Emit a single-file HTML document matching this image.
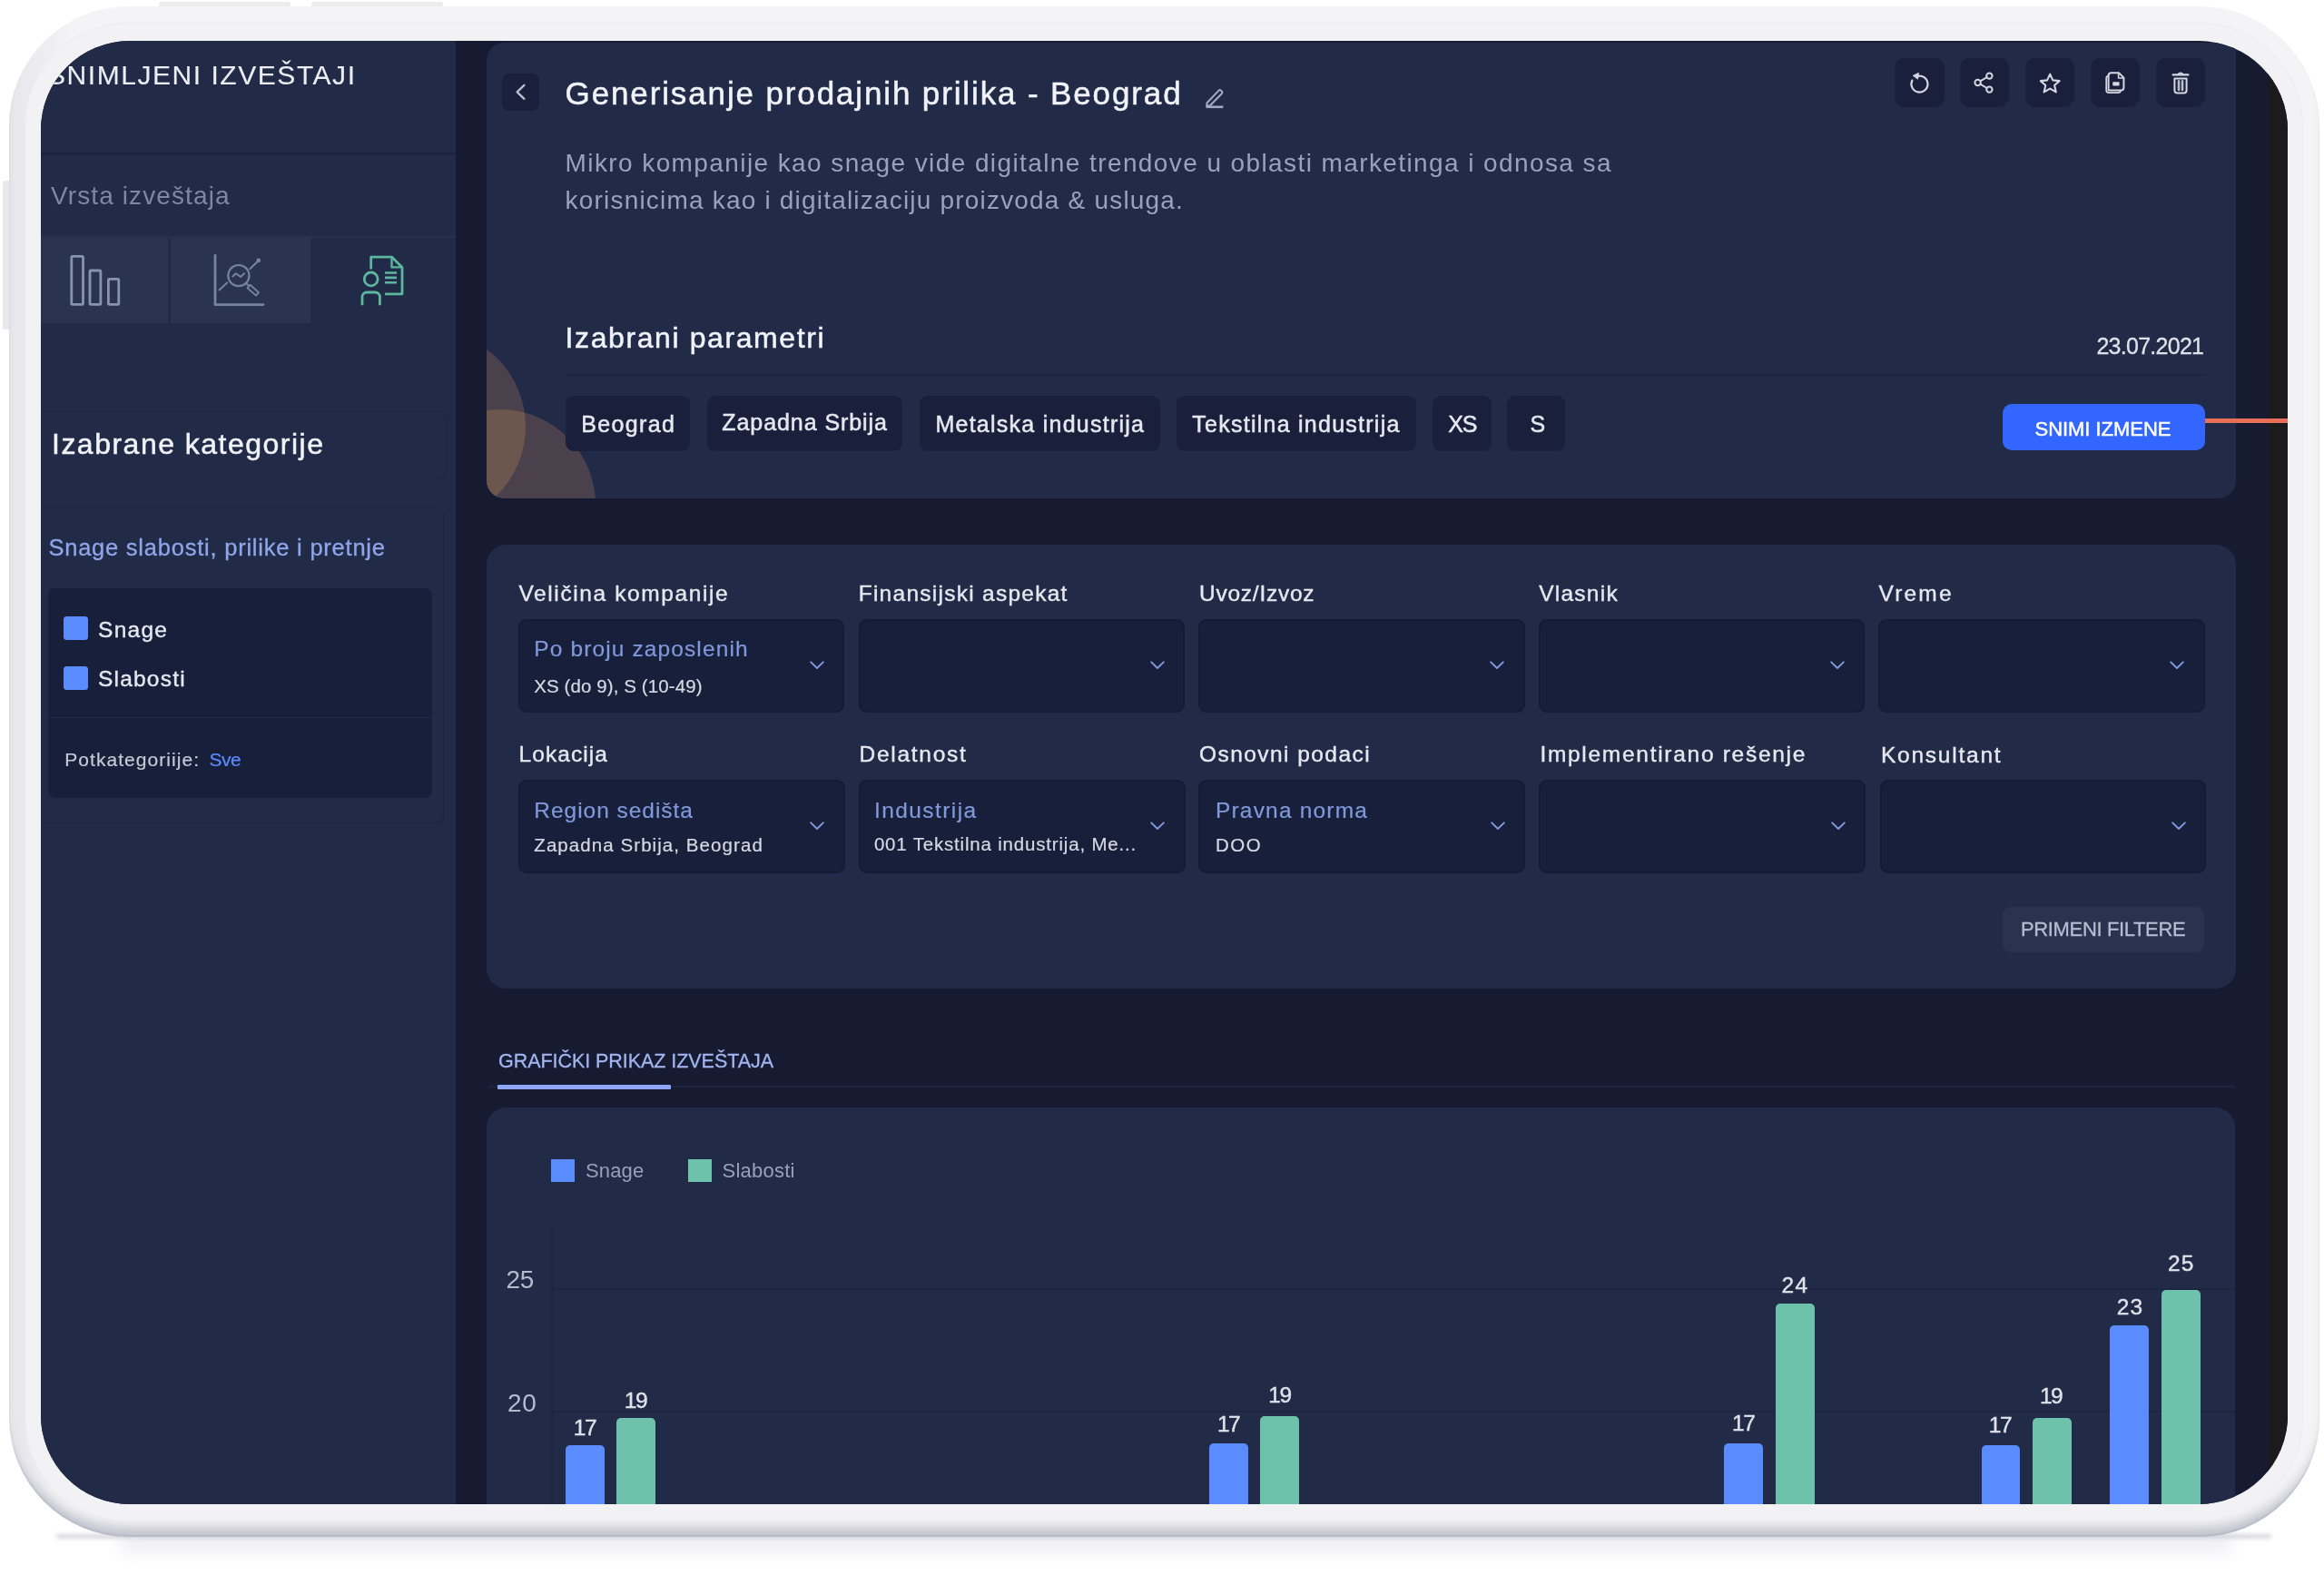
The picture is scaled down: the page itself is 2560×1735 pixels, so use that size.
<!DOCTYPE html>
<html lang="sr"><head><meta charset="utf-8"><title>Snimljeni izveštaji</title>
<style>
html,body{margin:0;padding:0;background:#fff;}
body{width:2560px;height:1735px;position:relative;overflow:hidden;font-family:"Liberation Sans",sans-serif;}
.a{position:absolute;}
.t{position:absolute;white-space:nowrap;line-height:1;font-family:"Liberation Sans",sans-serif;}
.sel{background:#181f3a;border:2px solid #151b33;border-radius:9px;box-sizing:border-box;}
#shadow{position:absolute;left:62px;top:1690px;width:2440px;height:5px;border-radius:6px;background:rgba(178,178,194,.5);filter:blur(2px);}
#shadow2{position:absolute;left:130px;top:1690px;width:2330px;height:20px;border-radius:20px;background:rgba(212,212,224,.4);filter:blur(9px);}
#dev{position:absolute;left:10px;top:7px;width:2545px;height:1686px;border-radius:132px;background:linear-gradient(90deg,#e6e6ea 0,#eaeaee 18px,#f4f4f6 70px);
 box-shadow:inset 0 -20px 12px -9px rgba(150,150,170,.5), inset 0 -2px 2px 0 rgba(160,160,180,.3);}
#dev2{position:absolute;left:28px;top:26px;width:2508px;height:1649px;border-radius:113px;background:#f2f2f4;box-shadow:0 0 0 1px #ececf0;}
#screen{position:absolute;left:45px;top:45px;width:2474.5px;height:1612px;border-radius:98px;background:#161b32;overflow:hidden;will-change:transform;}
.hb{position:absolute;background:#ececef;}
</style></head>
<body>
<div id="shadow2"></div><div id="shadow"></div>
<div class="hb" style="left:175px;top:2px;width:145px;height:8px;border-radius:3px 3px 0 0"></div>
<div class="hb" style="left:343px;top:2px;width:145px;height:8px;border-radius:3px 3px 0 0"></div>
<div class="hb" style="left:3px;top:199px;width:9px;height:164px;border-radius:3px 0 0 3px;background:#e9e9ed"></div>
<div id="dev"></div>
<div id="dev2"></div>
<div id="screen">
<div class="a" style="left:0.0px;top:0.0px;width:457.3px;height:1615.0px;background:#212b47;"></div>
<div class="a" style="left:0.0px;top:122.5px;width:457.3px;height:3.5px;background:#1c2340;"></div>
<div class="a" style="left:0.0px;top:215.0px;width:457.3px;height:1.5px;background:#27314d;"></div>
<div class="a" style="left:0.0px;top:216.5px;width:140.0px;height:94.0px;background:#2a3451;"></div>
<div class="a" style="left:142.5px;top:216.5px;width:154.5px;height:94.0px;background:#2a3451;"></div>
<svg class="a" style="left:25px;top:229px" width="70" height="70" viewBox="70 274 70 70" fill="none" stroke="#8693b3" stroke-width="2.8" stroke-linejoin="round">
<rect x="78.8" y="282.3" width="12.7" height="53.1" rx="1"/><rect x="99" y="298" width="11.9" height="37.4" rx="1"/><rect x="119.4" y="307.4" width="11.4" height="28" rx="1"/></svg>
<svg class="a" style="left:183px;top:229px" width="70" height="70" viewBox="228 274 70 70" fill="none" stroke="#7583a4" stroke-width="2.4" stroke-linecap="round" stroke-linejoin="round">
<path d="M237 281.5 V335.6 H290" stroke-width="2.8"/>
<circle cx="262.9" cy="303.6" r="11.6" stroke-width="2.2"/>
<path d="M256.3 304.5 l3.6 -3.2 l5.2 3.6 l4 -3.6" stroke-width="2"/>
<path d="M241.5 319.4 L250.2 311.4" stroke-width="2"/>
<path d="M275.3 296.3 L283.5 288.2" stroke-width="2"/>
<circle cx="284.8" cy="286.9" r="1.6" fill="#7583a4" stroke-width="1.4"/>
<path d="M271.5 312.4 L274.4 315" stroke-width="2"/>
<path d="M275.6 313.8 l9.4 8.4 l-3 3.4 l-9.4 -8.4 z" stroke-width="1.9"/>
</svg>
<svg class="a" style="left:345px;top:229px" width="70" height="70" viewBox="390 274 70 70" fill="none" stroke="#5db69e" stroke-width="2.8" stroke-linejoin="round">
<path d="M408.7 296.5 V283.1 H431.5 L443 294.4 V323.8 H424" />
<path d="M431.5 283.1 V294.4 H443" stroke-width="2.4"/>
<circle cx="408.7" cy="307.4" r="7.4"/>
<path d="M399 336.3 V327 a5 5 0 0 1 5 -5 h9.4 a5 5 0 0 1 5 5 V336.3" />
<path d="M424 300.5 H437 M424 305.9 H437 M424 311.3 H437" stroke-width="2.6"/>
</svg>
<div class="a" style="left:-25.0px;top:407.0px;width:472.0px;height:77.0px;border:2px solid #1e2743;border-radius:9px;box-sizing:border-box;"></div>
<div class="a" style="left:-25.0px;top:512.5px;width:470.0px;height:350.5px;border:2px solid #1e2743;border-radius:9px;box-sizing:border-box;"></div>
<div class="a" style="left:8.4px;top:602.6px;width:422.6px;height:231.0px;background:#181f3a;border-radius:8px;"></div>
<div class="a" style="left:8.4px;top:744.7px;width:422.6px;height:1.6px;background:#212a46;"></div>
<div class="a" style="left:24.8px;top:634.3px;width:26.8px;height:25.7px;background:#5b8cff;border-radius:3.5px;"></div>
<div class="a" style="left:24.8px;top:689.0px;width:26.8px;height:25.8px;background:#5b8cff;border-radius:3.5px;"></div>
<div class="a" style="left:491.0px;top:2.0px;width:1927.3px;height:501.6px;background:#212b47;border-radius:20px 0 20px 20px;overflow:hidden;"><svg class="a" style="left:0;top:300px" width="200" height="202" viewBox="536 347 200 202"><defs><clipPath id="cc1"><circle cx="473" cy="470" r="106"/></clipPath></defs><circle cx="473" cy="470" r="106" fill="#4b414c"/><circle cx="551" cy="556" r="105" fill="#4b414c"/><circle cx="551" cy="556" r="105" fill="#6c564e" clip-path="url(#cc1)"/></svg></div>
<div class="a" style="left:508.0px;top:35.6px;width:41.0px;height:41.0px;background:#1a203b;border-radius:8px;"></div>
<svg class="a" style="left:516.5px;top:44px" width="24" height="24" viewBox="0 0 24 24"><path d="M15.4 4.8 L7.6 12.3 L15.4 19.8" fill="none" stroke="#b9bfce" stroke-width="2.3" stroke-linecap="round" stroke-linejoin="round"/></svg>
<svg class="a" style="left:1279px;top:49px" width="28" height="28" viewBox="1324 94 28 28" fill="none" stroke="#a3abc0" stroke-width="2" stroke-linejoin="round" stroke-linecap="round">
<path d="M1329.6 113.2 L1342.6 99.6 a1.6 1.6 0 0 1 2.2 0 l1.2 1.2 a1.6 1.6 0 0 1 0 2.2 L1333 116.2 L1329.2 116.8 Z"/>
<path d="M1328.6 117.8 H1347.4" stroke-width="2.6" stroke-linecap="butt"/></svg>
<div class="a" style="left:2042.4px;top:18.5px;width:54.2px;height:54.5px;background:#1a203b;border-radius:11px;"></div>
<div class="a" style="left:2114.3px;top:18.5px;width:54.2px;height:54.5px;background:#1a203b;border-radius:11px;"></div>
<div class="a" style="left:2186.3px;top:18.5px;width:54.2px;height:54.5px;background:#1a203b;border-radius:11px;"></div>
<div class="a" style="left:2258.3px;top:18.5px;width:54.2px;height:54.5px;background:#1a203b;border-radius:11px;"></div>
<div class="a" style="left:2330.3px;top:18.5px;width:54.2px;height:54.5px;background:#1a203b;border-radius:11px;"></div>
<svg class="a" style="left:2042.4px;top:18.5px" width="54" height="54" viewBox="0 0 54 54" fill="none" stroke="#d3d7e1" stroke-width="2.2" stroke-linecap="round">
<path d="M24.2 20.2 A9 9 0 1 1 19.4 24.6"/><path d="M20.6 19.2 L26.4 16.4 L25.6 22.8 Z" fill="#d3d7e1" stroke-width="1" stroke-linejoin="round"/></svg>
<svg class="a" style="left:2114.3px;top:18.5px" width="54" height="54" viewBox="0 0 54 54" fill="none" stroke="#d3d7e1" stroke-width="2">
<circle cx="32.4" cy="19.6" r="3.2"/><circle cx="32.4" cy="34.6" r="3.2"/><circle cx="19.6" cy="27" r="3.2"/>
<path d="M22.4 25.4 L29.6 21.2 M22.4 28.6 L29.6 33"/></svg>
<svg class="a" style="left:2186.3px;top:18.5px" width="54" height="54" viewBox="0 0 54 54" fill="none" stroke="#d3d7e1" stroke-width="2.1" stroke-linejoin="round">
<path d="M27.2 17.6 L30.3 24.4 L37.6 25.1 L32.1 30 L33.8 37.4 L27.2 33.6 L20.6 37.4 L22.3 30 L16.8 25.1 L24.1 24.4 Z"/></svg>
<svg class="a" style="left:2258.3px;top:18.5px" width="54" height="54" viewBox="0 0 54 54" fill="none" stroke="#d3d7e1" stroke-width="2" stroke-linejoin="round">
<path d="M19.6 35.6 V19.2 a3 3 0 0 1 3 -3 h8.4 l5.4 5.4 V32.6 a3 3 0 0 1 -3 3 Z"/>
<path d="M30.6 16.6 V22 H36" stroke-width="1.6"/>
<path d="M19.6 19.6 a2.6 2.6 0 0 0 -2.4 2.6 V35.6 a2.6 2.6 0 0 0 2.6 2.6 h10.6 a2.6 2.6 0 0 0 2.6 -2.6" stroke-width="1.7"/>
<rect x="24.2" y="26.2" width="7.4" height="4.4" rx=".8" fill="#d3d7e1" stroke="none"/></svg>
<svg class="a" style="left:2330.3px;top:18.5px" width="54" height="54" viewBox="0 0 54 54" fill="none" stroke="#d3d7e1" stroke-width="2" stroke-linejoin="round" stroke-linecap="round">
<path d="M18.6 18.4 H35.4" stroke-width="2.2"/><path d="M24 18 q3 -3.4 6 0" stroke-width="1.8"/>
<path d="M20.4 22.4 H33.6 V35.4 a3 3 0 0 1 -3 3 H23.4 a3 3 0 0 1 -3 -3 Z"/>
<path d="M25 25.4 V35 M29 25.4 V35" stroke-width="2.6" stroke="#b9bece"/></svg>
<div class="a" style="left:577.6px;top:367.4px;width:1806.0px;height:2.0px;background:#1c2440;"></div>
<div class="a" style="left:577.6px;top:390.5px;width:137.4px;height:61.8px;background:#1a203b;border-radius:9px;"></div>
<div class="a" style="left:733.5px;top:390.5px;width:215.9px;height:61.8px;background:#1a203b;border-radius:9px;"></div>
<div class="a" style="left:968.2px;top:390.5px;width:264.7px;height:61.8px;background:#1a203b;border-radius:9px;"></div>
<div class="a" style="left:1251.1px;top:390.5px;width:264.0px;height:61.8px;background:#1a203b;border-radius:9px;"></div>
<div class="a" style="left:1533.0px;top:390.5px;width:64.5px;height:61.8px;background:#1a203b;border-radius:9px;"></div>
<div class="a" style="left:1614.7px;top:390.5px;width:64.6px;height:61.8px;background:#1a203b;border-radius:9px;"></div>
<div class="a" style="left:2161.3px;top:399.5px;width:222.7px;height:51.9px;background:#3366ff;border-radius:10px;"></div>
<div class="a" style="left:491.0px;top:555.0px;width:1926.8px;height:489.0px;background:#212b47;border-radius:22px;"></div>
<div class="a sel" style="left:526.0px;top:636.6px;width:359.4px;height:103.7px;"></div>
<svg class="a" style="left:845.0px;top:680.0px" width="20" height="16" viewBox="0 0 20 16"><path d="M3.2 4.4 L10 11 L16.8 4.4" fill="none" stroke="#8099db" stroke-width="2" stroke-linecap="round" stroke-linejoin="round"/></svg>
<div class="a sel" style="left:900.6px;top:636.6px;width:359.4px;height:103.7px;"></div>
<svg class="a" style="left:1219.6px;top:680.0px" width="20" height="16" viewBox="0 0 20 16"><path d="M3.2 4.4 L10 11 L16.8 4.4" fill="none" stroke="#8099db" stroke-width="2" stroke-linecap="round" stroke-linejoin="round"/></svg>
<div class="a sel" style="left:1275.2px;top:636.6px;width:359.4px;height:103.7px;"></div>
<svg class="a" style="left:1594.2px;top:680.0px" width="20" height="16" viewBox="0 0 20 16"><path d="M3.2 4.4 L10 11 L16.8 4.4" fill="none" stroke="#8099db" stroke-width="2" stroke-linecap="round" stroke-linejoin="round"/></svg>
<div class="a sel" style="left:1649.6px;top:636.6px;width:359.4px;height:103.7px;"></div>
<svg class="a" style="left:1968.6px;top:680.0px" width="20" height="16" viewBox="0 0 20 16"><path d="M3.2 4.4 L10 11 L16.8 4.4" fill="none" stroke="#8099db" stroke-width="2" stroke-linecap="round" stroke-linejoin="round"/></svg>
<div class="a sel" style="left:2024.2px;top:636.6px;width:359.4px;height:103.7px;"></div>
<svg class="a" style="left:2343.2px;top:680.0px" width="20" height="16" viewBox="0 0 20 16"><path d="M3.2 4.4 L10 11 L16.8 4.4" fill="none" stroke="#8099db" stroke-width="2" stroke-linecap="round" stroke-linejoin="round"/></svg>
<div class="a sel" style="left:526.0px;top:813.8px;width:359.8px;height:103.7px;"></div>
<svg class="a" style="left:845.4px;top:857.4px" width="20" height="16" viewBox="0 0 20 16"><path d="M3.2 4.4 L10 11 L16.8 4.4" fill="none" stroke="#8099db" stroke-width="2" stroke-linecap="round" stroke-linejoin="round"/></svg>
<div class="a sel" style="left:900.8px;top:813.8px;width:359.8px;height:103.7px;"></div>
<svg class="a" style="left:1220.2px;top:857.4px" width="20" height="16" viewBox="0 0 20 16"><path d="M3.2 4.4 L10 11 L16.8 4.4" fill="none" stroke="#8099db" stroke-width="2" stroke-linecap="round" stroke-linejoin="round"/></svg>
<div class="a sel" style="left:1275.4px;top:813.8px;width:359.8px;height:103.7px;"></div>
<svg class="a" style="left:1594.8px;top:857.4px" width="20" height="16" viewBox="0 0 20 16"><path d="M3.2 4.4 L10 11 L16.8 4.4" fill="none" stroke="#8099db" stroke-width="2" stroke-linecap="round" stroke-linejoin="round"/></svg>
<div class="a sel" style="left:1650.4px;top:813.8px;width:359.8px;height:103.7px;"></div>
<svg class="a" style="left:1969.8px;top:857.4px" width="20" height="16" viewBox="0 0 20 16"><path d="M3.2 4.4 L10 11 L16.8 4.4" fill="none" stroke="#8099db" stroke-width="2" stroke-linecap="round" stroke-linejoin="round"/></svg>
<div class="a sel" style="left:2025.6px;top:813.8px;width:359.8px;height:103.7px;"></div>
<svg class="a" style="left:2345.0px;top:857.4px" width="20" height="16" viewBox="0 0 20 16"><path d="M3.2 4.4 L10 11 L16.8 4.4" fill="none" stroke="#8099db" stroke-width="2" stroke-linecap="round" stroke-linejoin="round"/></svg>
<div class="a" style="left:2161.4px;top:953.5px;width:221.6px;height:50.3px;background:#29334f;border-radius:9px;"></div>
<div class="a" style="left:492.5px;top:1151.3px;width:1924.5px;height:1.7px;background:#1e2540;"></div>
<div class="a" style="left:503.4px;top:1149.6px;width:190.6px;height:5.6px;background:#8ea6f6;border-radius:1px;"></div>
<div class="a" style="left:491.4px;top:1175.4px;width:1925.6px;height:479.6px;background:#212b47;border-radius:22px;"></div>
<div class="a" style="left:562.3px;top:1231.5px;width:25.9px;height:25.9px;background:#5b8cff;"></div>
<div class="a" style="left:712.8px;top:1231.5px;width:25.9px;height:25.9px;background:#6ec1ab;"></div>
<div class="a" style="left:562.4px;top:1309.0px;width:2.0px;height:306.0px;background:#1c2440;"></div>
<div class="a" style="left:564.0px;top:1374.0px;width:1853.0px;height:2.0px;background:#1d2541;"></div>
<div class="a" style="left:564.0px;top:1509.4px;width:1853.0px;height:2.0px;background:#1d2541;"></div>
<div class="a" style="left:577.8px;top:1547.0px;width:43.2px;height:78.0px;background:#5b8cff;border-radius:5px 5px 0 0;"></div>
<div class="a" style="left:633.5px;top:1517.0px;width:43.2px;height:108.0px;background:#6ec1ab;border-radius:5px 5px 0 0;"></div>
<div class="a" style="left:1287.0px;top:1545.0px;width:43.1px;height:80.0px;background:#5b8cff;border-radius:5px 5px 0 0;"></div>
<div class="a" style="left:1342.9px;top:1514.7px;width:43.1px;height:110.3px;background:#6ec1ab;border-radius:5px 5px 0 0;"></div>
<div class="a" style="left:1854.3px;top:1545.0px;width:42.7px;height:80.0px;background:#5b8cff;border-radius:5px 5px 0 0;"></div>
<div class="a" style="left:1910.6px;top:1390.6px;width:43.0px;height:234.4px;background:#6ec1ab;border-radius:5px 5px 0 0;"></div>
<div class="a" style="left:2137.8px;top:1547.0px;width:42.7px;height:78.0px;background:#5b8cff;border-radius:5px 5px 0 0;"></div>
<div class="a" style="left:2193.9px;top:1517.0px;width:43.1px;height:108.0px;background:#6ec1ab;border-radius:5px 5px 0 0;"></div>
<div class="a" style="left:2279.2px;top:1414.7px;width:43.2px;height:210.3px;background:#5b8cff;border-radius:5px 5px 0 0;"></div>
<div class="a" style="left:2336.0px;top:1376.4px;width:43.2px;height:248.6px;background:#6ec1ab;border-radius:5px 5px 0 0;"></div>
<div class="a" style="left:2452.6px;top:0.0px;width:22.4px;height:1615.0px;background:#1b1b1d;"></div>
<div class="a" style="left:2384.0px;top:415.6px;width:91.0px;height:5.0px;background:#e86f57;"></div>
<span class="t" id="sb_head" style="left:7.0px;top:22.6px;font-size:30px;color:#eceef4;letter-spacing:1.546px;-webkit-text-stroke:0.1px #eceef4;">SNIMLJENI IZVEŠTAJI</span>
<span class="t" id="sb_vrsta" style="left:11.0px;top:157.0px;font-size:28px;color:#7c88a6;letter-spacing:1.112px;">Vrsta izveštaja</span>
<span class="t" id="sb_izab" style="left:12.0px;top:427.9px;font-size:32px;color:#f1f3f8;letter-spacing:1.490px;-webkit-text-stroke:0.5px #f1f3f8;">Izabrane kategorije</span>
<span class="t" id="sb_swot" style="left:8.4px;top:546.4px;font-size:25.5px;color:#8fa6ea;letter-spacing:0.773px;-webkit-text-stroke:0.3px #8fa6ea;">Snage slabosti, prilike i pretnje</span>
<span class="t" id="sb_snage" style="left:63.0px;top:637.0px;font-size:24.5px;color:#e6e8ef;letter-spacing:1.285px;-webkit-text-stroke:0.4px #e6e8ef;">Snage</span>
<span class="t" id="sb_slab" style="left:63.0px;top:690.9px;font-size:24.5px;color:#e6e8ef;letter-spacing:1.204px;-webkit-text-stroke:0.4px #e6e8ef;">Slabosti</span>
<span class="t" id="sb_pot" style="left:26.3px;top:780.8px;font-size:21px;color:#c5c9d6;letter-spacing:1.044px;-webkit-text-stroke:0.2px #c5c9d6;">Potkategoriije:</span>
<span class="t" id="sb_sve" style="left:185.4px;top:780.8px;font-size:21px;color:#5b8cff;letter-spacing:-0.494px;-webkit-text-stroke:0.2px #5b8cff;">Sve</span>
<span class="t" id="title" style="left:577.6px;top:40.0px;font-size:35px;color:#f1f3f8;letter-spacing:1.868px;-webkit-text-stroke:0.5px #f1f3f8;">Generisanje prodajnih prilika - Beograd</span>
<span class="t" id="p1" style="left:577.6px;top:121.3px;font-size:28px;color:#97a2bd;letter-spacing:1.404px;">Mikro kompanije kao snage vide digitalne trendove u oblasti marketinga i odnosa sa</span>
<span class="t" id="p2" style="left:577.6px;top:162.3px;font-size:28px;color:#97a2bd;letter-spacing:1.194px;">korisnicima kao i digitalizaciju proizvoda &amp; usluga.</span>
<span class="t" id="izpar" style="left:577.6px;top:310.5px;font-size:32px;color:#f1f3f8;letter-spacing:1.595px;-webkit-text-stroke:0.5px #f1f3f8;">Izabrani parametri</span>
<span class="t" id="date" style="left:2264.4px;top:323.5px;font-size:25px;color:#dfe2ea;letter-spacing:-0.725px;-webkit-text-stroke:0.3px #dfe2ea;">23.07.2021</span>
<span class="t" id="ch1" style="left:595.3px;top:409.8px;font-size:25px;color:#e6e8ef;letter-spacing:1.345px;-webkit-text-stroke:0.5px #e6e8ef;">Beograd</span>
<span class="t" id="ch2" style="left:750.3px;top:408.4px;font-size:25px;color:#e6e8ef;letter-spacing:0.934px;-webkit-text-stroke:0.5px #e6e8ef;">Zapadna Srbija</span>
<span class="t" id="ch3" style="left:985.4px;top:410.0px;font-size:25px;color:#e6e8ef;letter-spacing:1.254px;-webkit-text-stroke:0.5px #e6e8ef;">Metalska industrija</span>
<span class="t" id="ch4" style="left:1268.3px;top:410.0px;font-size:25px;color:#e6e8ef;letter-spacing:1.254px;-webkit-text-stroke:0.5px #e6e8ef;">Tekstilna industrija</span>
<span class="t" id="ch5" style="left:1550.2px;top:410.0px;font-size:25px;color:#e6e8ef;letter-spacing:-1.200px;-webkit-text-stroke:0.5px #e6e8ef;">XS</span>
<span class="t" id="ch6" style="left:1640.5px;top:410.0px;font-size:25px;color:#e6e8ef;-webkit-text-stroke:0.5px #e6e8ef;">S</span>
<span class="t" id="snimi" style="left:2196.5px;top:416.6px;font-size:22px;color:#ffffff;letter-spacing:-0.040px;-webkit-text-stroke:0.5px #ffffff;">SNIMI IZMENE</span>
<span class="t" id="l11" style="left:526.5px;top:597.3px;font-size:24.5px;color:#e6e8ef;letter-spacing:1.598px;-webkit-text-stroke:0.4px #e6e8ef;">Veličina kompanije</span>
<span class="t" id="l12" style="left:900.7px;top:597.3px;font-size:24.5px;color:#e6e8ef;letter-spacing:1.262px;-webkit-text-stroke:0.4px #e6e8ef;">Finansijski aspekat</span>
<span class="t" id="l13" style="left:1276.0px;top:597.3px;font-size:24.5px;color:#e6e8ef;letter-spacing:0.754px;-webkit-text-stroke:0.4px #e6e8ef;">Uvoz/Izvoz</span>
<span class="t" id="l14" style="left:1650.2px;top:597.3px;font-size:24.5px;color:#e6e8ef;letter-spacing:1.253px;-webkit-text-stroke:0.4px #e6e8ef;">Vlasnik</span>
<span class="t" id="l15" style="left:2024.6px;top:597.3px;font-size:24.5px;color:#e6e8ef;letter-spacing:2.184px;-webkit-text-stroke:0.4px #e6e8ef;">Vreme</span>
<span class="t" id="l21" style="left:526.6px;top:774.3px;font-size:24.5px;color:#e6e8ef;letter-spacing:1.044px;-webkit-text-stroke:0.4px #e6e8ef;">Lokacija</span>
<span class="t" id="l22" style="left:901.5px;top:774.3px;font-size:24.5px;color:#e6e8ef;letter-spacing:1.723px;-webkit-text-stroke:0.4px #e6e8ef;">Delatnost</span>
<span class="t" id="l23" style="left:1276.0px;top:774.3px;font-size:24.5px;color:#e6e8ef;letter-spacing:1.439px;-webkit-text-stroke:0.4px #e6e8ef;">Osnovni podaci</span>
<span class="t" id="l24" style="left:1651.4px;top:774.3px;font-size:24.5px;color:#e6e8ef;letter-spacing:1.713px;-webkit-text-stroke:0.4px #e6e8ef;">Implementirano rešenje</span>
<span class="t" id="l25" style="left:2026.9px;top:774.7px;font-size:24.5px;color:#e6e8ef;letter-spacing:1.769px;-webkit-text-stroke:0.4px #e6e8ef;">Konsultant</span>
<span class="t" id="s11a" style="left:543.3px;top:658.3px;font-size:24.5px;color:#8099db;letter-spacing:1.116px;-webkit-text-stroke:0.2px #8099db;">Po broju zaposlenih</span>
<span class="t" id="s11b" style="left:543.3px;top:700.6px;font-size:20.5px;color:#d5d9e3;letter-spacing:0.092px;-webkit-text-stroke:0.2px #d5d9e3;">XS (do 9), S (10-49)</span>
<span class="t" id="s21a" style="left:543.3px;top:835.5px;font-size:24.5px;color:#8099db;letter-spacing:0.971px;-webkit-text-stroke:0.2px #8099db;">Region sedišta</span>
<span class="t" id="s21b" style="left:543.3px;top:875.8px;font-size:20.5px;color:#d5d9e3;letter-spacing:1.071px;-webkit-text-stroke:0.2px #d5d9e3;">Zapadna Srbija, Beograd</span>
<span class="t" id="s22a" style="left:917.9px;top:835.5px;font-size:24.5px;color:#8099db;letter-spacing:1.431px;-webkit-text-stroke:0.2px #8099db;">Industrija</span>
<span class="t" id="s22b" style="left:917.9px;top:875.1px;font-size:20.5px;color:#d5d9e3;letter-spacing:0.811px;-webkit-text-stroke:0.2px #d5d9e3;">001 Tekstilna industrija, Me...</span>
<span class="t" id="s23a" style="left:1294.0px;top:835.5px;font-size:24.5px;color:#8099db;letter-spacing:1.183px;-webkit-text-stroke:0.2px #8099db;">Pravna norma</span>
<span class="t" id="s23b" style="left:1294.0px;top:875.8px;font-size:20.5px;color:#d5d9e3;letter-spacing:1.448px;-webkit-text-stroke:0.2px #d5d9e3;">DOO</span>
<span class="t" id="primeni" style="left:2181.0px;top:968.4px;font-size:22px;color:#b5bdd0;letter-spacing:-0.359px;-webkit-text-stroke:0.3px #b5bdd0;">PRIMENI FILTERE</span>
<span class="t" id="tab" style="left:504.0px;top:1114.0px;font-size:21.5px;color:#a3b5f0;letter-spacing:-0.051px;-webkit-text-stroke:0.3px #a3b5f0;">GRAFIČKI PRIKAZ IZVEŠTAJA</span>
<span class="t" id="lg1" style="left:599.9px;top:1234.4px;font-size:22px;color:#98a1b8;letter-spacing:0.169px;">Snage</span>
<span class="t" id="lg2" style="left:750.5px;top:1234.4px;font-size:22px;color:#98a1b8;letter-spacing:0.231px;">Slabosti</span>
<span class="t" id="ax25" style="left:512.6px;top:1350.9px;font-size:28px;color:#b5bccd;letter-spacing:-0.400px;">25</span>
<span class="t" id="ax20" style="left:514.0px;top:1486.7px;font-size:28px;color:#b5bccd;letter-spacing:0.800px;">20</span>
<span class="t" id="bl1" style="left:586.8px;top:1515.6px;font-size:24.5px;color:#dfe2ea;letter-spacing:-1.400px;-webkit-text-stroke:0.4px #dfe2ea;">17</span>
<span class="t" id="bl2" style="left:642.7px;top:1486.0px;font-size:24.5px;color:#dfe2ea;letter-spacing:-1.400px;-webkit-text-stroke:0.4px #dfe2ea;">19</span>
<span class="t" id="bl3" style="left:1295.9px;top:1511.9px;font-size:24.5px;color:#dfe2ea;letter-spacing:-1.400px;-webkit-text-stroke:0.4px #dfe2ea;">17</span>
<span class="t" id="bl4" style="left:1352.3px;top:1479.5px;font-size:24.5px;color:#dfe2ea;letter-spacing:-1.400px;-webkit-text-stroke:0.4px #dfe2ea;">19</span>
<span class="t" id="bl5" style="left:1863.0px;top:1511.3px;font-size:24.5px;color:#dfe2ea;letter-spacing:-1.400px;-webkit-text-stroke:0.4px #dfe2ea;">17</span>
<span class="t" id="bl6" style="left:1917.6px;top:1358.6px;font-size:24.5px;color:#dfe2ea;letter-spacing:1.200px;-webkit-text-stroke:0.4px #dfe2ea;">24</span>
<span class="t" id="bl7" style="left:2145.7px;top:1513.3px;font-size:24.5px;color:#dfe2ea;letter-spacing:-1.400px;-webkit-text-stroke:0.4px #dfe2ea;">17</span>
<span class="t" id="bl8" style="left:2201.9px;top:1481.0px;font-size:24.5px;color:#dfe2ea;letter-spacing:-1.400px;-webkit-text-stroke:0.4px #dfe2ea;">19</span>
<span class="t" id="bl9" style="left:2286.7px;top:1382.8px;font-size:24.5px;color:#dfe2ea;letter-spacing:1.200px;-webkit-text-stroke:0.4px #dfe2ea;">23</span>
<span class="t" id="bl10" style="left:2343.0px;top:1334.7px;font-size:24.5px;color:#dfe2ea;letter-spacing:1.200px;-webkit-text-stroke:0.4px #dfe2ea;">25</span>
</div>
</body></html>
